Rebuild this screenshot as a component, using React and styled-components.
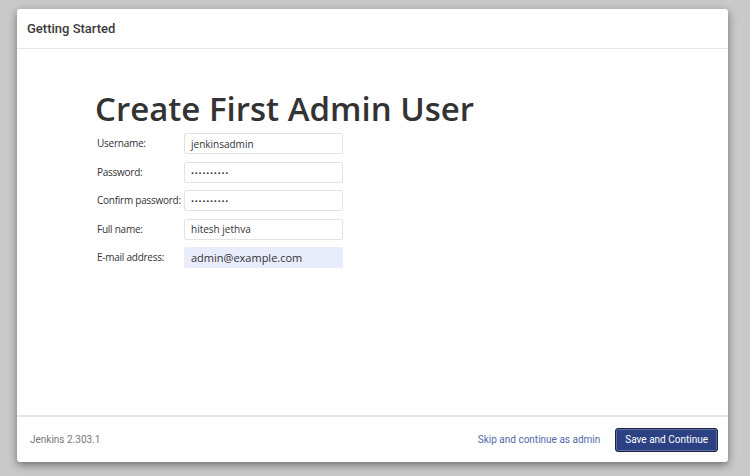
import React from "react";
import styled, { createGlobalStyle } from "styled-components";

const Global = createGlobalStyle`
  html, body {
    margin: 0;
    padding: 0;
    background: #c9c9c9;
    width: 750px;
    height: 476px;
    overflow: hidden;
  }
`;

const fields = [
  { label: "Username:", value: "jenkinsadmin" },
  { label: "Password:", value: "••••••••••", secret: true },
  { label: "Confirm password:", value: "••••••••••", secret: true },
  { label: "Full name:", value: "hitesh jethva" },
  { label: "E-mail address:", value: "admin@example.com", autofill: true },
];

const App = () => {
  return (
    <>
      <Global />
      <Page>
        <Modal>
          <Header>Getting Started</Header>
          <Body>
            <Title>Create First Admin User</Title>
            <Form>
              {fields.map((f) => (
                <Row key={f.label}>
                  <Label>{f.label}</Label>
                  <Input $autofill={f.autofill} $secret={f.secret}>
                    {f.value}
                  </Input>
                </Row>
              ))}
            </Form>
          </Body>
          <Footer>
            <Version>Jenkins 2.303.1</Version>
            <Actions>
              <Skip>Skip and continue as admin</Skip>
              <Save>Save and Continue</Save>
            </Actions>
          </Footer>
        </Modal>
      </Page>
    </>
  );
};

export default App;

const Page = styled.div`
  width: 750px;
  height: 476px;
  padding: 9px 0 0 17px;
  box-sizing: border-box;
`;

const Modal = styled.div`
  width: 711px;
  height: 453px;
  background: #fff;
  border-radius: 3px;
  box-shadow: 0 3px 8px rgba(0, 0, 0, 0.45);
  display: flex;
  flex-direction: column;
  font-family: Roboto, "Liberation Sans", sans-serif;
`;

const Header = styled.div`
  height: 39px;
  border-bottom: 1px solid #e5e5e5;
  display: flex;
  align-items: center;
  padding: 0 10px;
  font-size: 13px;
  font-weight: 500;
  color: #3a3a3a;
`;

const Body = styled.div`
  flex: 1;
  padding: 40px 0 0 78px;
`;

const Title = styled.h1`
  margin: 0 0 4px;
  font-family: "Open Sans", "DejaVu Sans", sans-serif;
  font-size: 33px;
  font-weight: 600;
  color: #333;
  line-height: 40px;
  letter-spacing: 0;
`;

const Form = styled.div`
  display: flex;
  flex-direction: column;
  gap: 7.5px;
  padding-left: 2px;
`;

const Row = styled.div`
  display: flex;
  align-items: flex-start;
`;

const Label = styled.div`
  width: 87px;
  white-space: nowrap;
  font-family: "Open Sans", "DejaVu Sans", sans-serif;
  font-size: 10px;
  letter-spacing: -0.25px;
  color: #333;
  padding-top: 3px;
`;

const Input = styled.div`
  width: 159px;
  height: 21px;
  box-sizing: border-box;
  border: 1px solid ${(p) => (p.$autofill ? "#e8ecfb" : "#e3e3e3")};
  border-radius: 2px;
  background: ${(p) => (p.$autofill ? "#e8ecfb" : "#fff")};
  padding: 0 6px;
  display: flex;
  align-items: center;
  font-family: "Open Sans", "DejaVu Sans", sans-serif;
  font-size: ${(p) => (p.$secret ? "8px" : p.$autofill ? "11px" : "10px")};
  letter-spacing: ${(p) => (p.$secret ? "0.8px" : "0")};
  color: #333;
`;

const Footer = styled.div`
  height: 45px;
  border-top: 2px solid #e4e4e4;
  display: flex;
  align-items: center;
  justify-content: space-between;
  padding: 0 10px 0 13px;
`;

const Version = styled.div`
  font-size: 10px;
  color: #777;
`;

const Actions = styled.div`
  display: flex;
  align-items: center;
  gap: 15px;
`;

const Skip = styled.div`
  font-size: 10px;
  color: #4f6aa8;
`;

const Save = styled.div`
  height: 22px;
  padding: 0 9px;
  display: flex;
  align-items: center;
  background: #2c4183;
  border: 1px solid #1a2440;
  box-shadow: inset 0 0 0 1px #5a6ea8;
  border-radius: 3px;
  color: #fff;
  font-size: 10px;
`;
